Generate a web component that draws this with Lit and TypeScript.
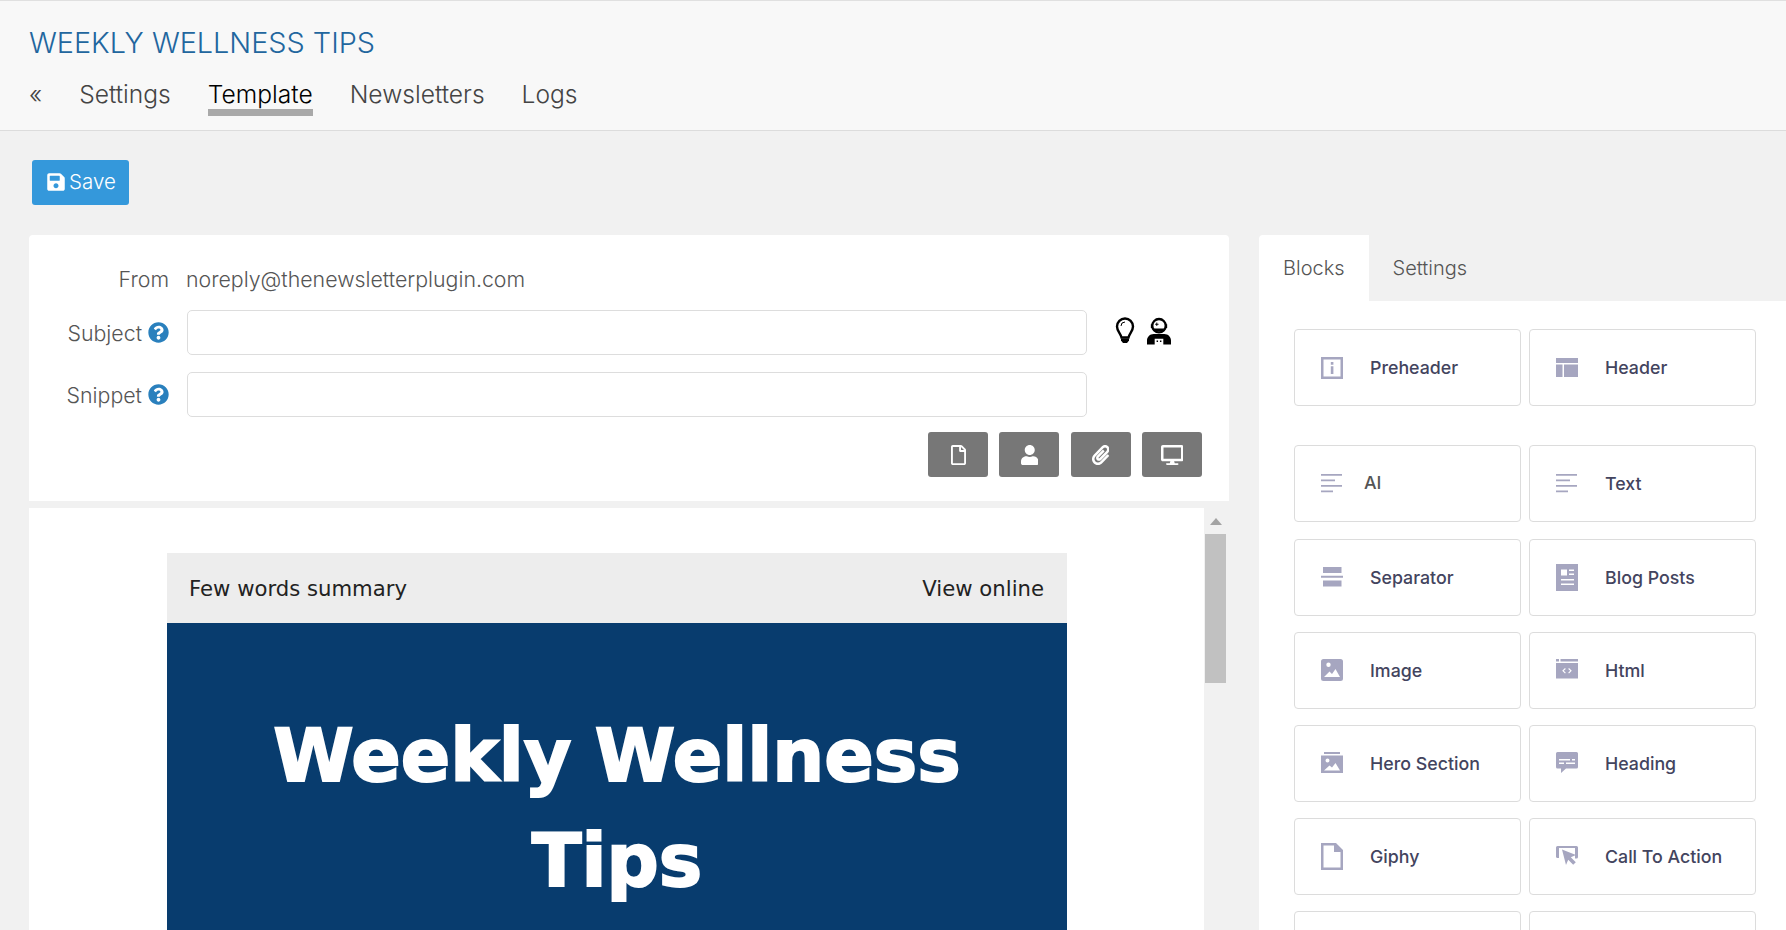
import { LitElement, html, css, svg } from "lit";
import { customElement } from "lit/decorators.js";

// 22 wide icons for the block palette, height varies
const blockIcons: Record<string, unknown> = {
  preheader: svg`<path fill-rule="evenodd" d="M0 0h22v22H0zM2.500 2.500v17h17v-17z" /><path d="M9.800 5h2.600v2.800H9.800zM9.800 9.200h2.600V17H9.800z" />`,
  header: svg`<path d="M0 1h22v5H0zM0 7.500h6.500V20H0zM8 7.500h14V20H8z" />`,
  text: svg`<path d="M0 1h21v1.700H0zM0 6.500h14v1.700H0zM0 12h21v1.700H0zM0 17.500h12v1.700H0z" />`,
  separator: svg`<path d="M2 1h18.500v6H2zM0 9.800h22v1.900H0zM2 14.500h18.500v6H2z" />`,
  blog: svg`<path fill-rule="evenodd" d="M0 0h22v27H0zM5 5.500v6h6v-6zM13 5.500V7h5V5.500zM13 9.500V11h5V9.500zM5 15v1.500h13V15zM5 19.500V21h13v-1.500z" />`,
  image: svg`<path fill-rule="evenodd" d="M2.500 0h17A2.500 2.500 0 0 1 22 2.500v17a2.500 2.500 0 0 1-2.500 2.500h-17A2.500 2.500 0 0 1 0 19.500v-17A2.500 2.500 0 0 1 2.500 0zM7.500 3.500a2.200 2.200 0 1 0 0 4.400 2.200 2.200 0 0 0 0-4.400zM3 18h16l-4.500-8-3.500 5-2.500-2.500z" />`,
  html: svg`<path fill-rule="evenodd" d="M0 0h3v2.500H0zM4.500 0H22v2.500H4.500zM0 4h22v15.500H0zM9 9l-2.800 2.800L9 14.500l.8-.8-2-1.900 2-1.900zM13 9l-.8.900 2 1.900-2 1.900.8.800 2.800-2.700z" />`,
  hero: svg`<path fill-rule="evenodd" d="M3 0h16v2H3zM0 3.500h22V21H0zM6.500 6.500a2 2 0 1 0 0 4 2 2 0 0 0 0-4zM3 18.500h16l-4.500-7.500-3.500 4.500-2.500-2z" />`,
  heading: svg`<path fill-rule="evenodd" d="M1.500 0h19A1.500 1.500 0 0 1 22 1.500V15a1.500 1.500 0 0 1-1.500 1.500H10L5 21v-4.500H1.500A1.500 1.500 0 0 1 0 15V1.500A1.500 1.500 0 0 1 1.500 0zM3 7v1.500h11V7zM16 7v1.500h3V7zM3 10.500V12h5v-1.500zM10 10.500V12h9v-1.500z" />`,
  giphy: svg`<path fill-rule="evenodd" d="M0 0h15l7 7v20H0zM2.500 2.500v22h17V9h-6.500V2.500z" />`,
  cta: svg`<path d="M1.500 0h19A1.500 1.500 0 0 1 22 1.500V11a1.500 1.500 0 0 1-1.500 1.500H19V2H3v10H1.500A1.500 1.500 0 0 1 0 11V1.500A1.500 1.500 0 0 1 1.500 0z" /><path d="M6 3.500L20 9l-5.200 2.200 5 5-2.600 2.600-5-5L10 19z" />`,
};

const blocks = [
  { name: "Preheader", icon: "preheader" },
  { name: "Header", icon: "header" },
  { name: "AI", icon: "text" },
  { name: "Text", icon: "text" },
  { name: "Separator", icon: "separator" },
  { name: "Blog Posts", icon: "blog" },
  { name: "Image", icon: "image" },
  { name: "Html", icon: "html" },
  { name: "Hero Section", icon: "hero" },
  { name: "Heading", icon: "heading" },
  { name: "Giphy", icon: "giphy" },
  { name: "Call To Action", icon: "cta" },
  { name: "", icon: "" },
  { name: "", icon: "" },
];

const questionIcon = html`<svg class="help" viewBox="0 0 512 512">
  <path
    d="M504 256c0 136.997-111.043 248-248 248S8 392.997 8 256C8 119.083 119.043 8 256 8s248 111.083 248 248zM262.655 90c-54.497 0-89.255 22.957-116.549 63.758-3.536 5.286-2.353 12.415 2.715 16.258l34.699 26.31c5.205 3.947 12.621 3.008 16.665-2.122 17.864-22.658 30.113-35.797 57.303-35.797 20.429 0 45.698 13.148 45.698 32.958 0 14.976-12.363 22.667-32.534 33.976C247.128 238.528 216 254.941 216 296v4c0 6.627 5.373 12 12 12h56c6.627 0 12-5.373 12-12v-1.333c0-28.462 83.186-29.647 83.186-106.667 0-58.002-60.165-102-116.531-102zM256 338c-25.365 0-46 20.635-46 46 0 25.364 20.635 46 46 46s46-20.636 46-46c0-25.365-20.635-46-46-46z"
  />
</svg>`;

@customElement("app-root")
export class AppRoot extends LitElement {
  static styles = css`
    :host {
      display: block;
      height: 930px;
      overflow: hidden;
      background: #f1f1f1;
      font-family: Inter, "Liberation Sans", sans-serif;
      color: #555;
    }

    .top {
      box-sizing: border-box;
      height: 131px;
      padding: 24px 29px 0;
      background: #f8f8f8;
      border-top: 1px solid #e0e0e0;
      border-bottom: 1px solid #dcdcdc;
    }

    .title {
      font-size: 28.800px;
      font-weight: 300;
      line-height: 36px;
      color: #22669e;
    }

    .nav {
      display: flex;
      align-items: flex-start;
      gap: 37px;
      margin-top: 18px;
      font-size: 24.600px;
      font-weight: 300;
      line-height: 30px;
      color: #444;
    }

    .nav .on {
      color: #000;
      border-bottom: 7px solid #a9a9a9;
    }

    .save-row {
      box-sizing: border-box;
      height: 104px;
      padding: 29px 32px 0;
    }

    .save {
      display: inline-flex;
      align-items: center;
      gap: 4px;
      box-sizing: border-box;
      width: 97px;
      height: 45px;
      padding: 0 0 2px 15px;
      border-radius: 3px;
      background: #3498db;
      color: #fff;
      font-size: 20.500px;
      font-weight: 300;
    }

    .save svg {
      width: 18px;
      height: 20px;
      fill: #fff;
    }

    .columns {
      display: flex;
      align-items: flex-start;
      padding-left: 29px;
      gap: 30px;
    }

    .left {
      flex: 0 0 1200px;
    }

    .meta {
      box-sizing: border-box;
      height: 266px;
      padding-top: 32px;
      background: #fff;
      border-radius: 4px 4px 0 0;
    }

    .row {
      display: flex;
      align-items: center;
    }

    .row .label {
      flex: 0 0 140px;
      display: flex;
      justify-content: flex-end;
      align-items: center;
      gap: 6px;
      font-size: 21.330px;
      font-weight: 300;
      color: #555;
    }

    .from {
      height: 24px;
      margin-bottom: 19px;
    }

    .from .value {
      margin-left: 17px;
      font-size: 21.330px;
      font-weight: 300;
      color: #555;
    }

    .help {
      width: 21px;
      height: 21px;
      fill: #2a80bd;
    }

    .field {
      box-sizing: border-box;
      width: 900px;
      height: 45px;
      margin-left: 18px;
      border: 1px solid #dddddd;
      border-radius: 5px;
      background: #fff;
    }

    .row.snippet {
      margin-top: 17px;
    }

    .hints {
      display: flex;
      align-items: center;
      gap: 12px;
      margin: -4px 0 0 28px;
    }

    .actions {
      display: flex;
      justify-content: flex-end;
      gap: 11.300px;
      margin-top: 15px;
      padding-right: 27px;
    }

    .act {
      display: flex;
      align-items: center;
      justify-content: center;
      width: 60px;
      height: 45px;
      border-radius: 3px;
      background: #777;
    }

    .act svg {
      height: 20px;
      fill: #fff;
    }

    .editor {
      display: flex;
      height: 430px;
      margin-top: 7px;
    }

    .canvas {
      flex: 0 0 1175px;
      box-sizing: border-box;
      padding: 45px 0 0 138px;
      background: #fff;
    }

    .mail {
      width: 900px;
    }

    .pre {
      display: flex;
      justify-content: space-between;
      align-items: center;
      box-sizing: border-box;
      height: 70px;
      padding: 0 23px 0 22px;
      background: #ededed;
      color: #222;
      font-family: "DejaVu Sans", sans-serif;
      font-size: 21.200px;
    }

    .banner {
      box-sizing: border-box;
      height: 400px;
      padding-top: 80px;
      background: #083c6e;
      color: #fff;
      text-align: center;
      font-family: "DejaVu Sans", sans-serif;
      font-size: 73px;
      font-weight: 700;
      word-spacing: -2px;
      line-height: 105px;
      -webkit-text-stroke: 2px #fff;
    }

    .scroll {
      flex: 0 0 25px;
    }

    .scroll i {
      display: block;
      width: 0;
      height: 0;
      margin: 10px 0 0 6px;
      border: 6px solid transparent;
      border-top: 0;
      border-bottom: 7px solid #a3a3a3;
    }

    .scroll b {
      display: block;
      width: 21px;
      height: 149px;
      margin: 9px 0 0 1px;
      background: #c1c1c1;
    }

    .right {
      flex: 1;
      min-width: 0;
    }

    .tabs {
      display: flex;
      height: 66px;
      font-size: 20px;
      font-weight: 300;
      color: #555;
    }

    .tabs span {
      display: flex;
      align-items: center;
      padding: 0 24px;
    }

    .tabs .on {
      background: #fff;
      border-radius: 4px 0 0 0;
    }

    .panel {
      height: 640px;
      padding: 28px 31px 0 35px;
      background: #fff;
    }

    .grid {
      display: grid;
      grid-template-columns: 227px 227px;
      grid-auto-rows: 77px;
      gap: 16.200px 8px;
    }

    .grid.first {
      margin-bottom: 39.400px;
    }

    .block {
      display: flex;
      align-items: center;
      box-sizing: border-box;
      padding-left: 26px;
      border: 1px solid #dcdcdc;
      border-radius: 4px;
      font-size: 17.800px;
      font-weight: 500;
      color: #43445e;
    }

    .block svg {
      flex: 0 0 22px;
      width: 22px;
      margin-right: 27px;
      fill: #a6a6c0;
    }

    .block.ai {
      color: #555;
    }

    .block.ai svg {
      margin-right: 21px;
    }

    .block.ai span {
      margin-top: -3px;
    }
  `;

  private renderBlock(b: (typeof blocks)[number]) {
    if (!b.name) return html`<div class="block"></div>`;
    const tall = b.icon === "blog" || b.icon === "giphy";
    const h = tall ? 27 : 22;
    return html`<div class="block ${b.name === "AI" ? "ai" : ""}">
      <svg viewBox="0 0 22 ${h}" height=${h}>${blockIcons[b.icon]}</svg>
      <span>${b.name}</span>
    </div>`;
  }

  render() {
    return html`
      <div class="top">
        <div class="title">WEEKLY WELLNESS TIPS</div>
        <div class="nav">
          <span>«</span>
          <span>Settings</span>
          <span class="on">Template</span>
          <span>Newsletters</span>
          <span>Logs</span>
        </div>
      </div>

      <div class="save-row">
        <div class="save">
          <svg viewBox="0 0 448 512">
            <path
              d="M433.941 129.941l-83.882-83.882A48 48 0 0 0 316.118 32H48C21.49 32 0 53.49 0 80v352c0 26.51 21.49 48 48 48h352c26.51 0 48-21.49 48-48V163.882a48 48 0 0 0-14.059-33.941zM224 416c-35.346 0-64-28.654-64-64 0-35.346 28.654-64 64-64s64 28.654 64 64c0 35.346-28.654 64-64 64zm96-304.52V212c0 6.627-5.373 12-12 12H76c-6.627 0-12-5.373-12-12V108c0-6.627 5.373-12 12-12h228.52c3.183 0 6.235 1.264 8.485 3.515l3.48 3.48A11.996 11.996 0 0 1 320 111.48z"
            />
          </svg>
          Save
        </div>
      </div>

      <div class="columns">
        <div class="left">
          <div class="meta">
            <div class="row from">
              <div class="label">From</div>
              <div class="value">noreply@thenewsletterplugin.com</div>
            </div>
            <div class="row">
              <div class="label">Subject ${questionIcon}</div>
              <div class="field"></div>
              <div class="hints">
                <svg width="20" height="28" viewBox="0 0 20 28">
                  <path
                    d="M10 1.500a8 8 0 0 0-8 8c0 4.500 3.500 6.500 4.500 11h7c1-4.500 4.500-6.500 4.500-11a8 8 0 0 0-8-8z"
                    fill="none"
                    stroke="#000"
                    stroke-width="2.400"
                  />
                  <path d="M6 21.500h8v2l-2 2.500H8l-2-2.500z" />
                  <path d="M6 9a4 4 0 0 1 4-4" fill="none" stroke="#000" />
                </svg>
                <svg width="24" height="28" viewBox="0 0 25 28">
                  <circle cx="12.500" cy="8.500" r="7" fill="none" stroke="#000" stroke-width="2.400" />
                  <path d="M4 7h2v4H4zM19 7h2v4h-2z" />
                  <path d="M7 11.500h11l-1.500 3h-8z" />
                  <path d="M8.500 7h3.500M10.200 5.200v3.500" stroke="#000" />
                  <path
                    fill-rule="evenodd"
                    d="M7 17h11c4 0 7 3 7 7v4H0v-4c0-4 3-7 7-7zM8 22v6h9v-6z"
                  />
                  <path d="M10 24h1.500v1.500H10zM13.500 24H15v1.500h-1.500z" />
                </svg>
              </div>
            </div>
            <div class="row snippet">
              <div class="label">Snippet ${questionIcon}</div>
              <div class="field"></div>
            </div>
            <div class="actions">
              <div class="act">
                <svg viewBox="0 0 384 512">
                  <path
                    d="M369.9 97.9L286 14C277 5 264.8-.1 252.1-.1H48C21.5 0 0 21.5 0 48v416c0 26.5 21.5 48 48 48h288c26.5 0 48-21.5 48-48V131.9c0-12.7-5.1-25-14.1-34zM332.1 128H256V51.9l76.1 76.1zM48 464V48h160v104c0 13.3 10.7 24 24 24h104v288H48z"
                  />
                </svg>
              </div>
              <div class="act">
                <svg viewBox="0 0 448 512">
                  <path
                    d="M224 256c70.7 0 128-57.3 128-128S294.7 0 224 0 96 57.3 96 128s57.3 128 128 128zm89.6 32h-16.7c-22.2 10.2-46.9 16-72.9 16s-50.6-5.8-72.9-16h-16.7C60.2 288 0 348.2 0 422.4V464c0 26.5 21.5 48 48 48h352c26.5 0 48-21.5 48-48v-41.6c0-74.2-60.2-134.4-134.4-134.4z"
                  />
                </svg>
              </div>
              <div class="act">
                <svg viewBox="0 0 448 512">
                  <path
                    d="M43.246 466.142c-58.43-60.289-57.341-157.511 1.386-217.581L254.392 34c44.316-45.332 116.351-45.336 160.671 0 43.89 44.894 43.943 117.329 0 162.276L232.214 383.128c-29.855 30.537-78.633 30.111-107.982-.998-28.275-29.97-27.368-77.473 1.452-106.953l143.743-146.835c6.182-6.314 16.312-6.422 22.626-.241l22.861 22.379c6.315 6.182 6.422 16.312.241 22.626L171.427 319.927c-4.932 5.045-5.236 13.428-.648 18.292 4.372 4.634 11.245 4.711 15.688.165l182.849-186.851c19.613-20.07 19.613-52.447-.017-72.453-19.357-19.74-50.61-19.81-70.056 0L89.538 293.8c-34.912 35.675-35.222 93.035-.691 128.671 34.7 35.789 91.064 35.865 125.88 0l172.456-176.4c6.172-6.322 16.302-6.445 22.625-.273l22.879 22.335c6.323 6.173 6.445 16.304.273 22.626L260.5 466.1c-60.234 61.54-158.166 61.466-217.254.042z"
                  />
                </svg>
              </div>
              <div class="act">
                <svg viewBox="0 0 576 512">
                  <path
                    d="M528 0H48C21.5 0 0 21.5 0 48v320c0 26.5 21.5 48 48 48h192l-16 48h-72c-13.3 0-24 10.7-24 24s10.7 24 24 24h272c13.3 0 24-10.7 24-24s-10.7-24-24-24h-72l-16-48h192c26.5 0 48-21.5 48-48V48c0-26.5-21.5-48-48-48zm-16 352H64V64h448v288z"
                  />
                </svg>
              </div>
            </div>
          </div>

          <div class="editor">
            <div class="canvas">
              <div class="mail">
                <div class="pre">
                  <span>Few words summary</span>
                  <span>View online</span>
                </div>
                <div class="banner">Weekly Wellness<br />Tips</div>
              </div>
            </div>
            <div class="scroll"><i></i><b></b></div>
          </div>
        </div>

        <div class="right">
          <div class="tabs">
            <span class="on">Blocks</span>
            <span>Settings</span>
          </div>
          <div class="panel">
            <div class="grid first">${blocks.slice(0, 2).map((b) => this.renderBlock(b))}</div>
            <div class="grid">${blocks.slice(2).map((b) => this.renderBlock(b))}</div>
          </div>
        </div>
      </div>
    `;
  }
}
